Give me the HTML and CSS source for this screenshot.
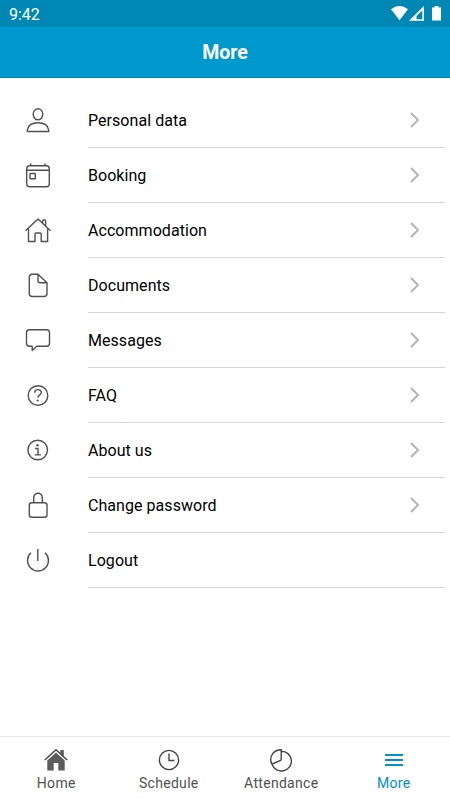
FILE: index.html
```
<!DOCTYPE html>
<html lang="en">

<head>
    <meta charset="UTF-8">
    <meta name="viewport" content="width=device-width, initial-scale=1.0">
    <title>More</title>

    <link rel="stylesheet" href="styles.css">
</head>

<body>
    <div class="status">
        <span>9:42</span>
        <svg width="54" height="18" viewBox="0 0 54 18" fill="white">
            <path d="M0 4.200Q8.500-2.200 17 4.200L8.500 15.200Z" />
            <path fill-rule="evenodd" d="M18 15.800L33 1V15.800ZM25.500 14.200H31.300V5.500L25.500 11Z" />
            <path d="M41 2.500h2.500V1h4v1.500H50V15.500h-9Z" />
        </svg>
    </div>

    <header>More</header>

    <main>
        <a class="row">
            <svg class="icon" viewBox="0 0 32 32">
                <ellipse cx="16" cy="10.300" rx="4.800" ry="5.500" />
                <path d="M5.300 27.500V26C6 21 10 18.700 16 18.700S26 21 26.700 26V27.500Z" />
            </svg>
            <div class="text">Personal data <svg class="arrow" viewBox="0 0 12 16"><path d="M2 1L9 8L2 15" /></svg></div>
        </a>
        <a class="row">
            <svg class="icon" viewBox="0 0 32 32">
                <rect x="4.700" y="6.700" width="22.600" height="21" rx="3" />
                <path d="M4.700 11.300H27.300M8.700 4.500V7M23 4.500V7" />
                <rect x="8" y="14.500" width="5.300" height="5.200" rx=".5" />
            </svg>
            <div class="text">Booking <svg class="arrow" viewBox="0 0 12 16"><path d="M2 1L9 8L2 15" /></svg></div>
        </a>
        <a class="row">
            <svg class="icon" viewBox="0 0 32 32">
                <path d="M3.500 16.800L16 5L28.500 16.800" />
                <path d="M6.500 14.500V27.500H13V20q0-1 1-1h4.200q1 0 1 1V27.500H25.600V14.500M20.600 9V7q0-1 1-1h1q1 0 1 1V12" />
            </svg>
            <div class="text">Accommodation <svg class="arrow" viewBox="0 0 12 16"><path d="M2 1L9 8L2 15" /></svg></div>
        </a>
        <a class="row">
            <svg class="icon" viewBox="0 0 32 32">
                <path d="M10.300 5.200H16L25 13.700V24.500q0 3-3 3H10.300q-3 0-3-3V8.200q0-3 3-3ZM16 5.200V11.700q0 2 2 2H25" />
            </svg>
            <div class="text">Documents <svg class="arrow" viewBox="0 0 12 16"><path d="M2 1L9 8L2 15" /></svg></div>
        </a>
        <a class="row">
            <svg class="icon" viewBox="0 0 32 32">
                <path d="M7.500 5.700H24.500q3 0 3 3V19.300q0 3-3 3H14.700L10.200 26.500V22.300H7.500q-3 0-3-3V8.700q0-3 3-3Z" />
            </svg>
            <div class="text">Messages <svg class="arrow" viewBox="0 0 12 16"><path d="M2 1L9 8L2 15" /></svg></div>
        </a>
        <a class="row">
            <svg class="icon" viewBox="0 0 32 32">
                <circle cx="16" cy="16.500" r="9.800" />
                <path d="M12.700 13.700C12.700 9.700 19.300 9.700 19.300 13.500C19.300 16 16 15.800 16 18.700" />
                <circle class="dot" cx="15.700" cy="21.500" r="1.100" />
            </svg>
            <div class="text">FAQ <svg class="arrow" viewBox="0 0 12 16"><path d="M2 1L9 8L2 15" /></svg></div>
        </a>
        <a class="row">
            <svg class="icon" viewBox="0 0 32 32">
                <circle cx="15.700" cy="16" r="9.800" />
                <path d="M13 14.500H16V20.700M12.700 20.900H19" />
                <circle class="dot" cx="15.500" cy="11.300" r="1.200" />
            </svg>
            <div class="text">About us <svg class="arrow" viewBox="0 0 12 16"><path d="M2 1L9 8L2 15" /></svg></div>
        </a>
        <a class="row">
            <svg class="icon" viewBox="0 0 32 32">
                <rect x="7.300" y="13.700" width="17.700" height="14.600" rx="2.500" />
                <path d="M11.700 13.700V8.500a4.300 4.300 0 0 1 8.600 0V13.700" />
            </svg>
            <div class="text">Change password <svg class="arrow" viewBox="0 0 12 16"><path d="M2 1L9 8L2 15" /></svg></div>
        </a>
        <a class="row">
            <svg class="icon" viewBox="0 0 32 32">
                <path d="M9 8.700A10.500 10.500 0 1 0 23 8.700M15.800 5V17" />
            </svg>
            <div class="text">Logout</div>
        </a>
    </main>

    <nav>
        <a class="tab">
            <svg width="26" height="26" viewBox="0 0 26 26">
                <path fill="#5c5c5c" d="M4.300 13.500L13 5.500L21.700 13.500V23.500H15.300V16H10.700V23.500H4.300ZM17.300 3H20.800V9.500L17.300 6.500Z" />
                <path class="thin" d="M1.800 13L13 2.700L24.200 13" />
            </svg>
            Home
        </a>
        <a class="tab">
            <svg class="thin" width="26" height="26" viewBox="0 0 26 26">
                <circle cx="13" cy="13" r="9.600" />
                <path d="M13 6.500V13.500H18.500" />
            </svg>
            Schedule
        </a>
        <a class="tab">
            <svg class="thin" width="26" height="26" viewBox="0 0 26 26">
                <path d="M13.200 13.200L4 17A9.900 9.900 0 1 0 13.200 4.200M13.200 13.200V2.700C6 2.700 .5 9 3.700 17" />
            </svg>
            Attendance
        </a>
        <a class="tab active">
            <svg width="26" height="26" viewBox="0 0 26 26" fill="#0090cb">
                <path d="M4 7h18v2H4ZM4 12h18v2H4ZM4 17h18v2H4Z" />
            </svg>
            More
        </a>
    </nav>
</body>

</html>
```
FILE: styles.css
```
body {
    margin: 0;
    height: 800px;
    display: flex;
    flex-direction: column;
    background-color: white;
    font-family: Roboto, sans-serif;
    overflow: hidden;
}

.status {
    display: flex;
    justify-content: space-between;
    box-sizing: border-box;
    height: 27px;
    padding: 5px 5px 0 9px;
    background-color: #0087b4;
    color: white;
    font-size: 16px;
    line-height: 19px;
}

header {
    box-sizing: border-box;
    height: 51px;
    border-bottom: 1px solid #0084b5;
    background-color: #0099ce;
    color: white;
    font-size: 19.5px;
    font-weight: bold;
    line-height: 51px;
    text-align: center;
}

main {
    flex: 1;
    padding: 15px 5px 0 22px;
}

.row {
    display: flex;
    align-items: center;
    height: 55px;
}

.icon {
    width: 32px;
    height: 32px;
    margin-right: 34px;
    margin-bottom: 1px;
    fill: none;
    stroke: #505050;
    stroke-width: 1.4;
    stroke-linejoin: round;
}

.icon .dot {
    fill: #505050;
    stroke: none;
}

.text {
    flex: 1;
    display: flex;
    justify-content: space-between;
    align-items: center;
    box-sizing: border-box;
    height: 55px;
    padding-right: 24px;
    border-bottom: 1px solid #d6d6d6;
    color: black;
    font-size: 16px;
    letter-spacing: 0.05px;
}

.arrow {
    width: 12px;
    height: 16px;
    fill: none;
    stroke: #b5b5b5;
    stroke-width: 2;
}

nav {
    display: flex;
    box-sizing: border-box;
    height: 64px;
    border-top: 1px solid #e6e6e6;
}

.tab {
    flex: 1;
    display: flex;
    flex-direction: column;
    align-items: center;
    padding-top: 10px;
    color: #505050;
    font-size: 14px;
    line-height: 20px;
    letter-spacing: 0.3px;
}

.thin {
    fill: none;
    stroke: #444;
    stroke-width: 1.4;
}

.active {
    color: #0090cb;
}
```
